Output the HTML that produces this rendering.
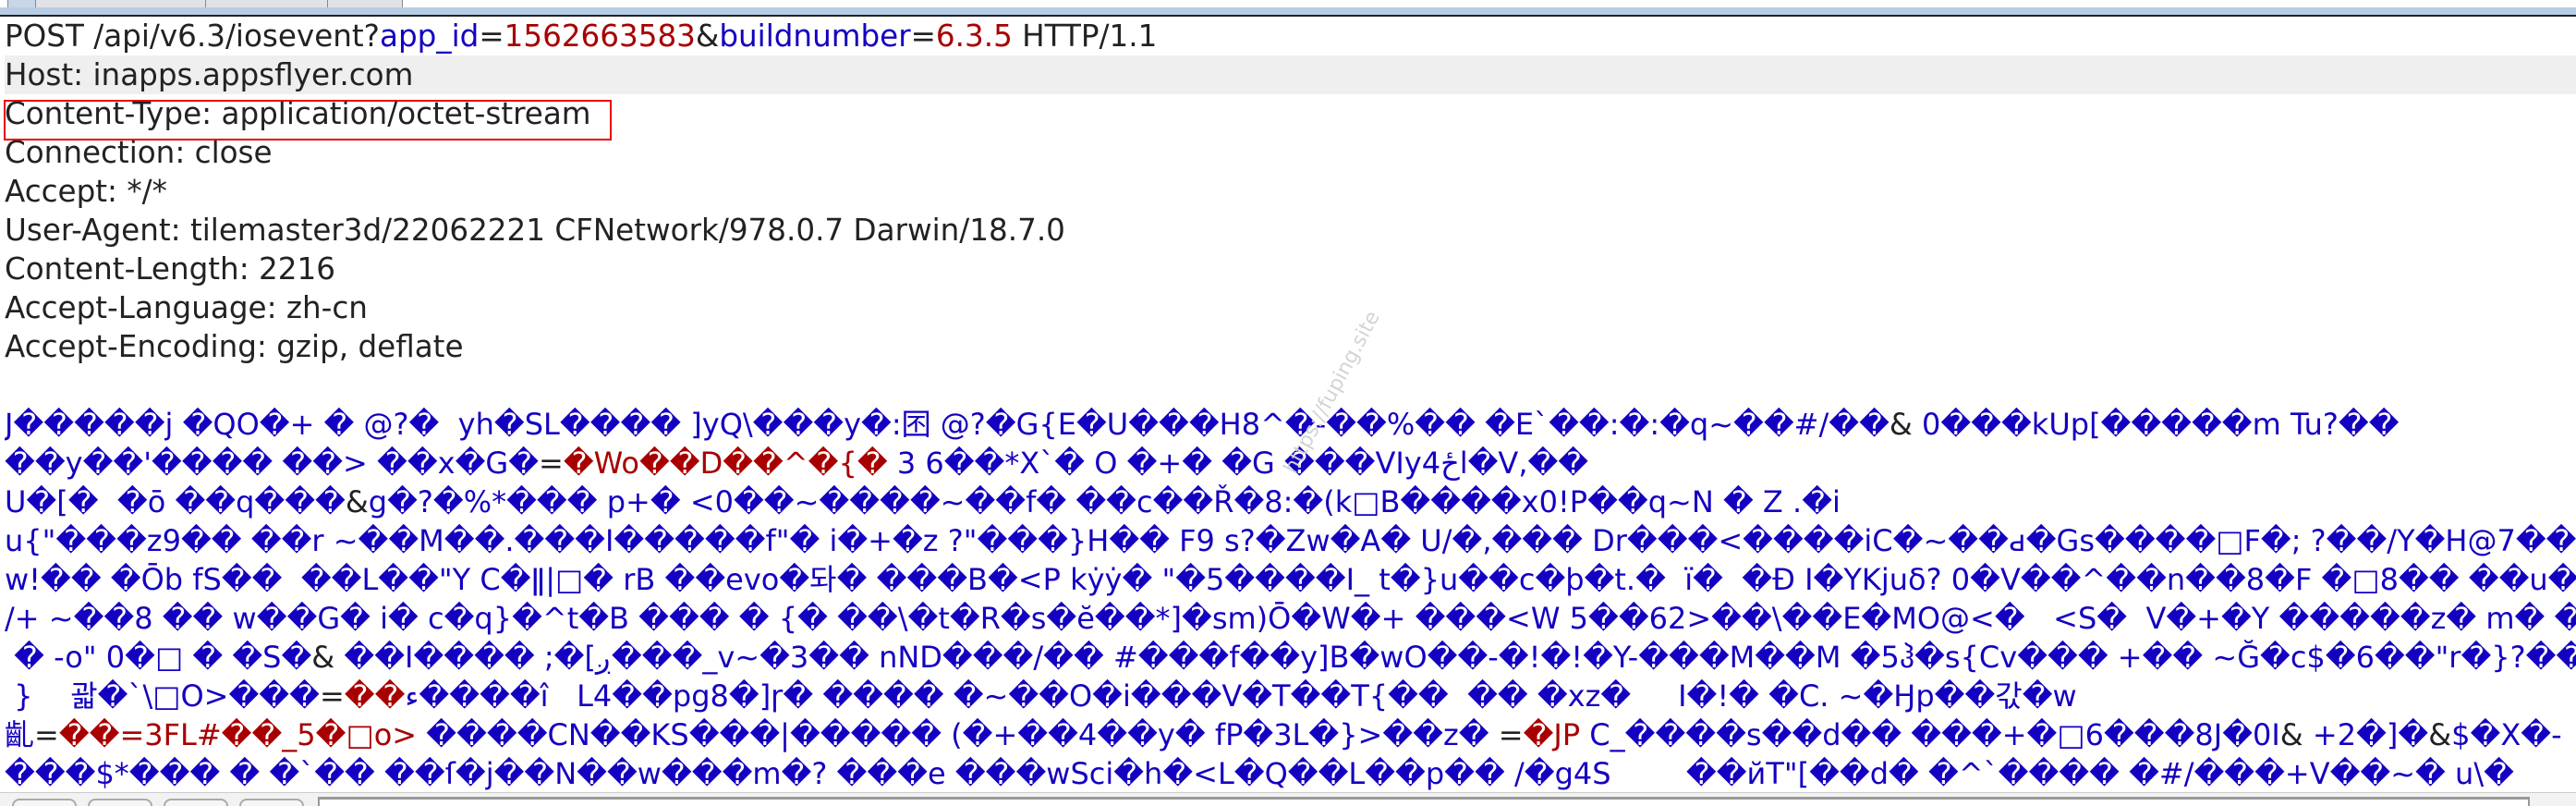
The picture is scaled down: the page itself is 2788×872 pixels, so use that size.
<!DOCTYPE html>
<html><head><meta charset="utf-8"><style>
html,body{margin:0;padding:0;background:#fff;width:2788px;height:872px;overflow:hidden;position:relative}
.top{position:absolute;left:0;top:0;width:2788px;height:18px;background:#fff}
.tab{position:absolute;top:0;height:9px;background:#e0e2e8;border:1px solid #888;border-top:none}
.strip{position:absolute;left:0;top:8px;width:2788px;height:8px;background:#b8cde4;border-bottom:2px solid #222}
.txt{position:absolute;left:5px;top:18px;font-family:"DejaVu Sans","Noto Sans CJK KR",sans-serif;font-size:32px;line-height:42px;white-space:pre;color:#222;width:2783px;overflow:hidden}
.ln{height:42px}
.h{font-size:32.6px}
.host{background:#efefef;margin-left:-5px;padding-left:5px}
.b{color:#1400c0}.r{color:#a80000}.k{color:#222}
.box{position:absolute;left:4px;top:108px;width:654px;height:40px;border:2px solid #e8000a}
.bot{position:absolute;left:0;top:857px;width:2788px;height:15px;background:#f2f2f2;border-top:1px solid #ccc}
.btn{position:absolute;top:864px;width:66px;height:12px;border:2px solid #aaa;border-radius:8px 8px 0 0;background:#f6f6f6}
.fld{position:absolute;left:344px;top:862px;width:2390px;height:14px;border-top:3px solid #999;border-left:2px solid #999;border-right:2px solid #999;background:#fff}
.wm{position:absolute;left:1385px;top:505px;font-family:"DejaVu Sans",sans-serif;font-size:22px;color:#d4d4d4;transform:rotate(-62deg);transform-origin:left top;white-space:nowrap}
</style></head><body>
<div class="top"></div>
<div class="tab" style="left:8px;width:30px;background:#c7d6e8"></div>
<div class="tab" style="left:38px;width:184px"></div>
<div class="tab" style="left:222px;width:132px"></div>
<div class="tab" style="left:354px;width:80px"></div>
<div class="strip"></div>
<div class="txt"><div class="ln h">POST /api/v6.3/iosevent?<span class="b">app_id</span>=<span class="r">1562663583</span>&amp;<span class="b">buildnumber</span>=<span class="r">6.3.5</span> HTTP/1.1</div><div class="ln h host">Host: inapps.appsflyer.com</div><div class="ln h">Content-Type: application/octet-stream</div><div class="ln h">Connection: close</div><div class="ln h">Accept: */*</div><div class="ln h">User-Agent: tilemaster3d/22062221 CFNetwork/978.0.7 Darwin/18.7.0</div><div class="ln h">Content-Length: 2216</div><div class="ln h">Accept-Language: zh-cn</div><div class="ln h">Accept-Encoding: gzip, deflate</div><div class="ln"> </div><div class="ln b">J�����j �QO�+ � @?�  yh�SL���� ]yQ\���y�:囨 @?�G{E�U���H8^�-��%�� �E`��:�:�q~��#/��<span class="k">&amp;</span> 0���kUp[�����m Tu?��</div><div class="ln b">��y��'���� ��&gt; ��x�G�<span class="k">=</span><span class="r">�Wo��D��^�{�</span> 3 6��*X`� O �+� �G ���VIy4ځl�V,��</div><div class="ln b">U�[�  �ō ��q���<span class="k">&amp;</span>g�?�%*��� p+� &lt;0��~����~��f� ��c��Ř�8:�(k□B����x0!P��q~N � Z .�i</div><div class="ln b">u{"���z9�� ��r ~��M��.���I�����f"� i�+�z ?"���}H�� F9 s?�Zw�A� U/�,��� Dr���&lt;����iC�~��ԁ�Gs����□F�; ?��/Y�H@7���/</div><div class="ln b">w!�� �Ōb fS��  ��L��"Y C�ǁ|□� rB ��evo�돠� ���B�&lt;P kẏẏ� "�5����I_ t�}u��c�þ�t.�  ï�  �Đ I�YKjuẟ? 0�V��^��n��8�F �□8�� ��u��</div><div class="ln b">/+ ~��8 �� w��G� i� c�q}�^t�B ��� � {� ��\�t�R�s�ĕ��*]�sm)Ō�W�+ ���&lt;W 5��62&gt;��\��E�MO@&lt;�   &lt;S�  V�+�Y �����z� m� �y</div><div class="ln b"> � -o" 0�□ � �S�<span class="k">&amp;</span> ��I���� ;�[ږ���_v~�3�� nND���/�� #���f��y]B�wO��-�!�!�Y-���M��M �5ჰ�s{Cv��� +�� ~Ğ�c$�6��"r�}?��r</div><div class="ln b"> }    괇�`\□O&gt;���<span class="k">=</span><span class="r">��</span>ء����î   L4��pg8�]ɼ� ���� �~��O�i���V�T��T{��  �� �xz�     I�!� �C. ~�Ӈp��갃�w</div><div class="ln b">齓<span class="k">=</span><span class="r">��=3FL#��_5�□o&gt;</span> ����CN��KS���|����� (�+��4��y� fP�3L�}&gt;��z� <span class="k">=</span><span class="r">�JP</span> C_����s��d�� ���+�□6���8J�0I<span class="k">&amp;</span> +2�]�<span class="k">&amp;</span>$�X�-</div><div class="ln b">���$*��� � �`�� ��ſ�j��N��w���m�? ���e ���wSci�h�&lt;L�Q��L��p�� /�g4S        ��йT"[��d� �^`���� �#/���+V��~� u\�</div></div>
<div class="box"></div>
<div class="wm">https://fuping.site</div>
<div class="bot"></div>
<div class="btn" style="left:13px"></div>
<div class="btn" style="left:95px"></div>
<div class="btn" style="left:177px"></div>
<div class="btn" style="left:259px"></div>
<div class="fld"></div>
</body></html>
